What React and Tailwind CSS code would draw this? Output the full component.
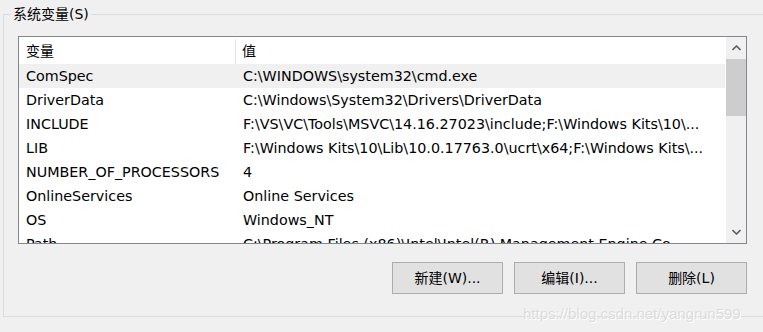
import React from "react";

const rows = [
  ["ComSpec", "C:\\WINDOWS\\system32\\cmd.exe", true],
  ["DriverData", "C:\\Windows\\System32\\Drivers\\DriverData"],
  ["INCLUDE", "F:\\VS\\VC\\Tools\\MSVC\\14.16.27023\\include;F:\\Windows Kits\\10\\..."],
  ["LIB", "F:\\Windows Kits\\10\\Lib\\10.0.17763.0\\ucrt\\x64;F:\\Windows Kits\\..."],
  ["NUMBER_OF_PROCESSORS", "4"],
  ["OnlineServices", "Online Services"],
  ["OS", "Windows_NT"],
  ["Path", "C:\\Program Files (x86)\\Intel\\Intel(R) Management Engine Co..."],
];

function Btn({ children }) {
  return (
    <button className="w-[111px] h-[32px] bg-[#e1e1e1] border border-[#adadad] text-[14px] text-black flex items-center justify-center">
      {children}
    </button>
  );
}

export default function App() {
  return (
    <div className="w-[763px] h-[332px] bg-[#f0f0f0] overflow-hidden relative text-black font-['DejaVu_Sans','Noto_Sans_CJK_SC',sans-serif]">
      <div className="pt-[14px] pl-[3px]">
        <div className="relative w-[770px] h-[303px] border-t border-l border-b border-[#dcdcdc] pt-[21px] pl-[14px]">
          <div className="absolute left-[7px] top-[-10px] px-[2px] bg-[#f0f0f0] text-[14px] leading-[18px]">
            系统变量(S)
          </div>
          <div className="w-[729px] h-[208px] border border-[#828790] bg-white flex">
            <div className="flex-1 overflow-hidden flex flex-col">
              <div className="h-[27px] pt-[2px] flex shrink-0 text-[14px]">
                <div className="w-[217px] pl-[7px] flex items-center border-r border-[#e5e5e5]">变量</div>
                <div className="flex-1 pl-[6px] flex items-center">值</div>
              </div>
              {rows.map(([k, v, sel]) => (
                <div
                  key={k}
                  className={`h-[24px] pt-[2px] shrink-0 flex items-center text-[14.3px] whitespace-nowrap ${sel ? "bg-[#f0f0f0]" : ""}`}
                >
                  <div className="w-[217px] pl-[7px]">{k}</div>
                  <div className="flex-1 pl-[7px] overflow-hidden">{v}</div>
                </div>
              ))}
            </div>
            <div className="w-[21px] bg-[#f0f0f0] flex flex-col items-center border-l border-white">
              <div className="h-[22px] w-full flex items-center justify-center">
                <svg width="9" height="6" viewBox="0 0 9 6">
                  <path d="M0.5 5 L4.5 1 L8.5 5" fill="none" stroke="#606060" strokeWidth="1.6" />
                </svg>
              </div>
              <div className="w-full h-[57px] bg-[#cdcdcd]" />
              <div className="flex-1" />
              <div className="h-[22px] w-full flex items-center justify-center">
                <svg width="9" height="6" viewBox="0 0 9 6">
                  <path d="M0.5 1 L4.5 5 L8.5 1" fill="none" stroke="#606060" strokeWidth="1.6" />
                </svg>
              </div>
            </div>
          </div>
          <div className="flex gap-[11px] mt-[18px] ml-[374px]">
            <Btn>新建(W)...</Btn>
            <Btn>编辑(I)...</Btn>
            <Btn>删除(L)</Btn>
          </div>
        </div>
      </div>
      <div className="absolute left-[523px] top-[303px] text-[15px] text-[#dadada] font-['Liberation_Sans',Arial,sans-serif] [text-shadow:0_0_1px_#fff,1px_1px_0_#fff]">
        https://blog.csdn.net/yangrun599
      </div>
    </div>
  );
}
